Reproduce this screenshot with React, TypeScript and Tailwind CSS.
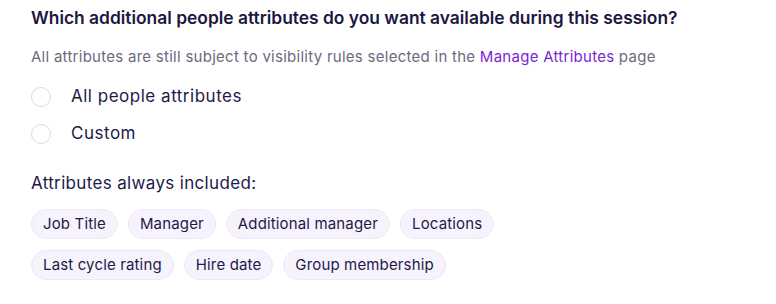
export default function App() {
  const row1 = ["Job Title", "Manager", "Additional manager", "Locations"];
  const row2 = ["Last cycle rating", "Hire date", "Group membership"];
  const Chip = ({ label }: { label: string }) => (
    <span className="inline-flex h-[30px] items-center rounded-full border border-[#ece8f8] bg-[#f6f3fd] px-[11px] text-[15px] tracking-[0.01em] text-[#1d1a4a]">
      {label}
    </span>
  );
  const Radio = ({ label }: { label: string }) => (
    <label className="flex h-[37px] items-center">
      <span className="h-[20px] w-[20px] rounded-full border border-[#dadada] bg-white" />
      <span className="ml-[20px] text-[17px] tracking-[0.03em] text-[#1d1a4a]">{label}</span>
    </label>
  );
  return (
    <div className="min-h-[304px] bg-white pl-[31px] pt-[6px]" style={{ fontFamily: "Inter, sans-serif" }}>
      <h2 className="text-[17.4px] font-semibold leading-[24px] text-[#1b1740]">
        Which additional people attributes do you want available during this session?
      </h2>
      <p className="mt-[17px] whitespace-nowrap text-[15px] leading-[20px] tracking-[0.018em] text-[#6b6a80]">
        All attributes are still subject to visibility rules selected in the{" "}
        <a className="text-[#7a1fd6]">Manage Attributes</a> page
      </p>
      <div className="mt-[11px] flex flex-col">
        <Radio label="All people attributes" />
        <Radio label="Custom" />
      </div>
      <p className="mt-[20px] text-[17px] leading-[22px] tracking-[0.02em] text-[#1d1a4a]">Attributes always included:</p>
      <div className="mt-[15px] flex flex-col gap-[11px]">
        <div className="flex gap-[10px]">
          {row1.map((l) => (
            <Chip key={l} label={l} />
          ))}
        </div>
        <div className="flex gap-[10px]">
          {row2.map((l) => (
            <Chip key={l} label={l} />
          ))}
        </div>
      </div>
    </div>
  );
}
